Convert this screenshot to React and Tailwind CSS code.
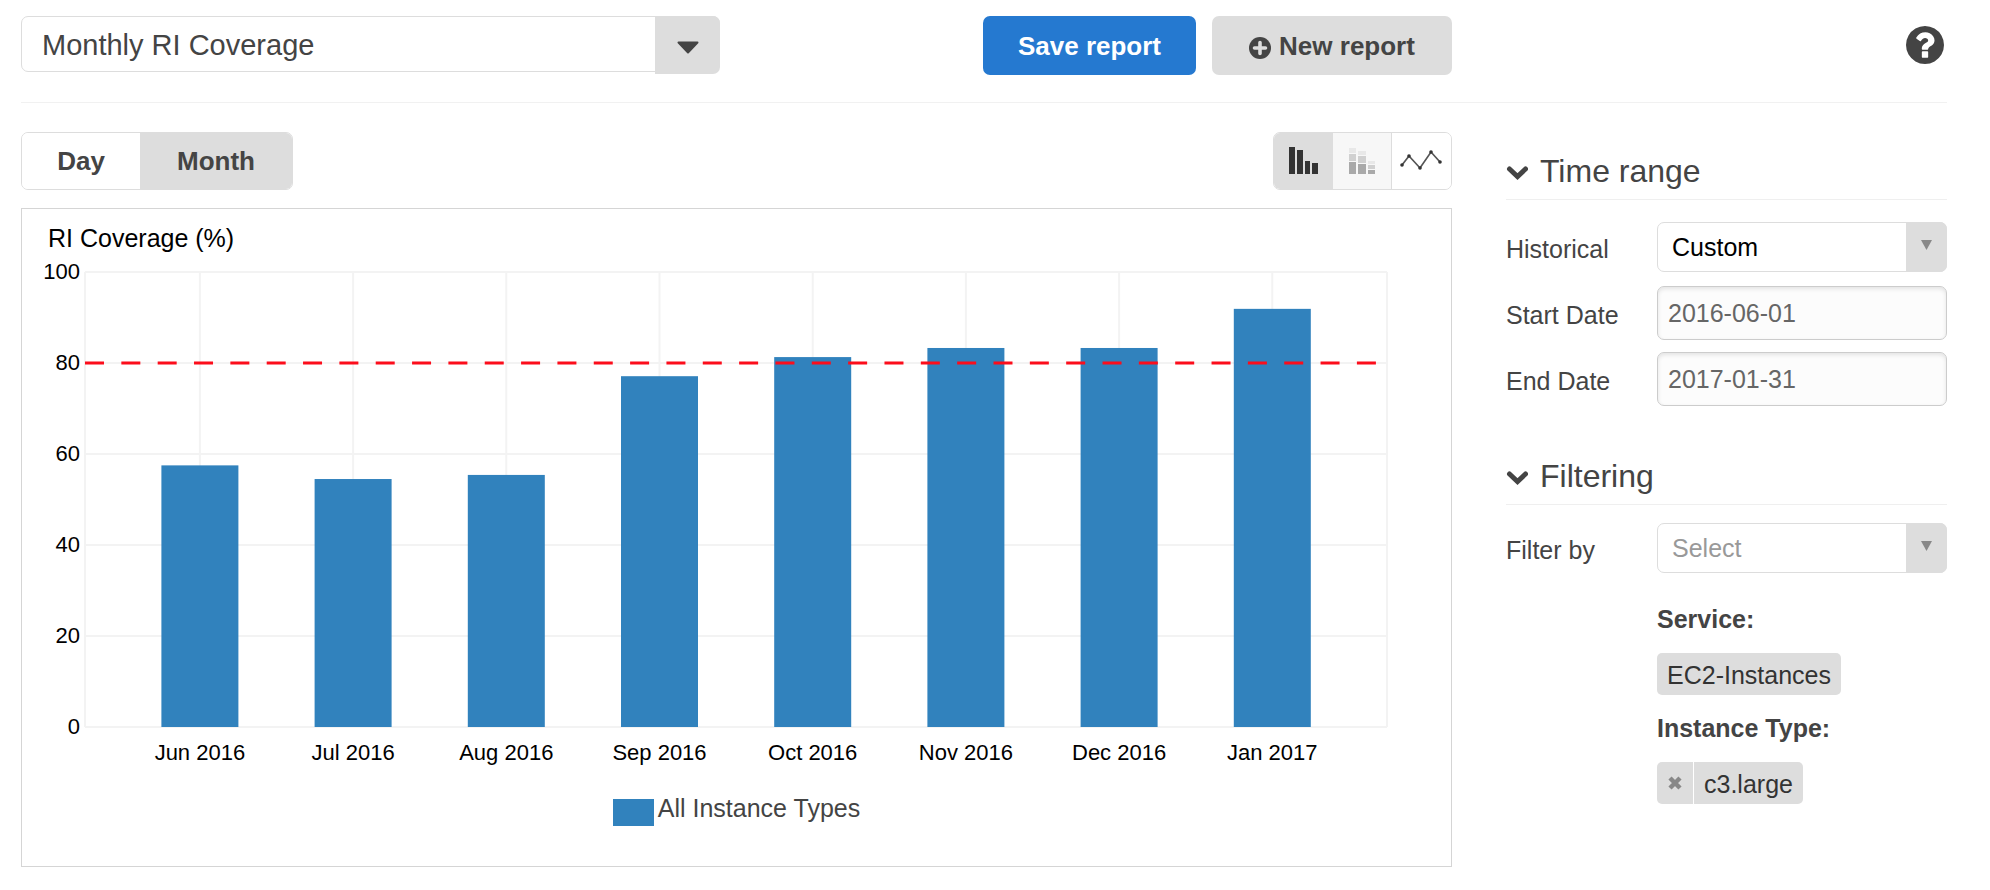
import { useState } from "react";

const BARS = [
  { label: "Jun 2016", value: 57.5 },
  { label: "Jul 2016", value: 54.5 },
  { label: "Aug 2016", value: 55.4 },
  { label: "Sep 2016", value: 77.1 },
  { label: "Oct 2016", value: 81.3 },
  { label: "Nov 2016", value: 83.3 },
  { label: "Dec 2016", value: 83.3 },
  { label: "Jan 2017", value: 91.9 },
];

const TICKS = [0, 20, 40, 60, 80, 100];

// plot area inside the chart's viewBox
const LEFT = 63;
const RIGHT = 1365;
const TOP = 12;
const BOTTOM = 467;
const STEP = 153.2;
const BAR_WIDTH = 77;

const yOf = (value) => BOTTOM - ((BOTTOM - TOP) * value) / 100;
const xOf = (i) => LEFT + STEP * (0.75 + i);

function CoverageChart({ target }) {
  return (
    <svg viewBox="0 0 1429 512" className="block w-full h-auto text-[22px]" role="img" aria-label="RI Coverage">
      <g stroke="#f3f3f3" strokeWidth="2">
        {TICKS.map((t) => (
          <line key={t} x1={LEFT} x2={RIGHT} y1={yOf(t)} y2={yOf(t)} />
        ))}
        {BARS.map((b, i) => (
          <line key={b.label} x1={xOf(i)} x2={xOf(i)} y1={TOP} y2={BOTTOM} />
        ))}
        <line x1={LEFT} x2={LEFT} y1={TOP} y2={BOTTOM} />
        <line x1={RIGHT} x2={RIGHT} y1={TOP} y2={BOTTOM} />
      </g>

      {TICKS.map((t) => (
        <text key={t} x={LEFT - 5} y={yOf(t) + 7} textAnchor="end">{t}</text>
      ))}

      {BARS.map((b, i) => (
        <g key={b.label}>
          <rect x={xOf(i) - BAR_WIDTH / 2} y={yOf(b.value)} width={BAR_WIDTH} height={BOTTOM - yOf(b.value)} fill="#3182bd" />
          <text x={xOf(i)} y="500" textAnchor="middle">{b.label}</text>
        </g>
      ))}

      <line
        x1={LEFT}
        x2={RIGHT}
        y1={yOf(target)}
        y2={yOf(target)}
        stroke="#fc0d1b"
        strokeWidth="3"
        strokeDasharray="19 17.34"
      />
    </svg>
  );
}

function BarsIcon() {
  return (
    <svg width="30" height="28" viewBox="0 0 30 28" fill="#333" aria-hidden="true">
      <rect x="0" y="0" width="6" height="27" />
      <rect x="8" y="3" width="6" height="24" />
      <rect x="16" y="14" width="5" height="13" />
      <rect x="23" y="16" width="6" height="11" />
    </svg>
  );
}

function StackedIcon() {
  return (
    <svg width="26" height="28" viewBox="0 0 26 28" aria-hidden="true">
      <g fill="#e8e8e8">
        <rect x="0" y="1" width="7" height="5" />
        <rect x="9" y="4" width="8" height="4" />
        <rect x="19" y="14" width="7" height="3" />
      </g>
      <g fill="#d0d0d0">
        <rect x="0" y="7" width="7" height="7" />
        <rect x="9" y="9" width="8" height="7" />
        <rect x="19" y="18" width="7" height="4" />
      </g>
      <g fill="#a9a9a9">
        <rect x="0" y="15" width="7" height="12" />
        <rect x="9" y="17" width="8" height="10" />
        <rect x="19" y="23" width="7" height="4" />
      </g>
    </svg>
  );
}

function LineIcon() {
  return (
    <svg width="44" height="22" viewBox="0 0 44 22" aria-hidden="true">
      <path d="M2 15 9 6 20 18 31 2 40 12" fill="none" stroke="#555" strokeWidth="1.7" />
      <g fill="#333">
        <circle cx="2" cy="15" r="1.8" />
        <circle cx="9" cy="6" r="1.8" />
        <circle cx="20" cy="18" r="1.8" />
        <circle cx="31" cy="2" r="1.8" />
        <circle cx="40" cy="12" r="1.8" />
      </g>
    </svg>
  );
}

function PlusCircleIcon() {
  return (
    <svg width="22" height="22" viewBox="0 0 22 22" aria-hidden="true">
      <circle cx="11" cy="11" r="11" fill="#444" />
      <path d="M11 5.5v11M5.5 11h11" stroke="#ddd" strokeWidth="3.6" strokeLinecap="round" />
    </svg>
  );
}

function HelpIcon() {
  return (
    <svg width="38" height="38" viewBox="0 0 1536 1536" aria-hidden="true">
      <path
        fill="#444"
        d="M896 1248v-192q0-14-9-23t-23-9H672q-14 0-23 9t-9 23v192q0 14 9 23t23 9h192q14 0 23-9t9-23zm256-672q0-88-55.500-163T958 297t-170-41q-243 0-371 213-15 24 8 42l132 100q7 6 19 6 16 0 25-12 53-68 86-92 34-24 86-24 48 0 85.500 26t37.500 59q0 38-20 61t-68 45q-63 28-115.500 86.500T640 892v36q0 14 9 23t23 9h192q14 0 23-9t9-23q0-19 21.500-49.500T972 829q32-18 49-28.500t46-35 44.500-48 28-60.500 12.500-81zm384 192q0 209-103 385.500T1153.500 1433 768 1536t-385.500-103T103 1153.500 0 768t103-385.500T382.500 103 768 0t385.500 103T1433 382.500 1536 768z"
      />
    </svg>
  );
}

function Section({ title, children }) {
  return (
    <section>
      <h2 className="border-b border-[#efefef] text-[32px] leading-10 pb-2 font-normal">
        <button type="button" className="flex items-center gap-3">
          <svg width="22" height="14" viewBox="0 0 22 14" className="mt-1" aria-hidden="true">
            <path d="M3.500 3l8 7.500L19.500 3" fill="none" stroke="#444" strokeWidth="5" strokeLinecap="round" />
          </svg>
          {title}
        </button>
      </h2>
      {children}
    </section>
  );
}

function Field({ label, id, children }) {
  return (
    <div className="flex h-[54px] items-center">
      <label htmlFor={id} className="w-[151px] shrink-0 pt-1">{label}</label>
      {children}
    </div>
  );
}

function SelectBox({ id, muted, children }) {
  return (
    <div className="relative flex-1">
      <select
        id={id}
        className={`block w-full h-[50px] appearance-none rounded-[7px] border border-[#ddd] bg-white pl-[14px] pr-12 ${muted ? "text-[#999]" : "text-black"}`}
      >
        {children}
      </select>
      <span className="pointer-events-none absolute inset-y-0 right-0 flex w-[41px] items-center justify-center rounded-r-[7px] bg-[#ddd]">
        <svg width="11" height="10" viewBox="0 0 11 10" className="mb-1" aria-hidden="true">
          <path d="M0 0h11L5.500 10z" fill="#888" />
        </svg>
      </span>
    </div>
  );
}

const dateClass =
  "block h-full w-full min-w-0 flex-1 rounded-[7px] border border-[#ccc] bg-[#fcfcfc] px-[10px] text-[#666] shadow-[inset_0_2px_4px_rgba(0,0,0,0.1)]";

export default function App() {
  const [granularity, setGranularity] = useState("Month");
  const [startDate, setStartDate] = useState("2016-06-01");
  const [endDate, setEndDate] = useState("2017-01-31");

  return (
    <div className="min-h-screen bg-white pl-[21px] pr-[43px] pt-4 font-['Liberation_Sans',Arial,sans-serif] text-[25px] leading-8 text-[#444]">
      {/* Top bar */}
      <header className="flex items-start border-b border-[#f1f1f1] pb-[27px]">
        <div className="flex flex-1 items-start justify-between">
          <div className="relative w-[699px]">
            <select
              aria-label="Report"
              className="block h-14 w-full appearance-none rounded-[7px] border border-[#ddd] bg-white pt-px pl-5 pr-16 text-[29px]"
            >
              <option>Monthly RI Coverage</option>
            </select>
            <span className="pointer-events-none absolute top-0 right-0 flex h-[58px] w-[65px] items-center justify-center rounded-r-[7px] bg-[#ddd]">
              <svg width="22" height="13" viewBox="0 0 22 13" className="mt-1" aria-hidden="true">
                <path d="M1.500 1.500h19L11 11.500z" fill="#444" stroke="#444" strokeWidth="2" strokeLinejoin="round" />
              </svg>
            </span>
          </div>
          <div className="flex gap-4 text-[26px] font-bold">
            <button type="button" className="h-[59px] w-[213px] rounded-[7px] bg-[#2579d0] text-white">
              Save report
            </button>
            <button type="button" className="flex h-[59px] w-[240px] items-center justify-center gap-2 rounded-[7px] bg-[#ddd]">
              <span className="pt-1"><PlusCircleIcon /></span>
              New report
            </button>
          </div>
        </div>
        <div className="ml-[54px] flex w-[441px] justify-end pt-[10px] pr-[3px]">
          <button type="button" aria-label="Help"><HelpIcon /></button>
        </div>
      </header>

      <div className="flex items-start gap-[54px] pt-[29px]">
        <main className="min-w-0 flex-1">
          <div className="flex justify-between">
            <div className="flex h-[58px] overflow-hidden rounded-[7px] border border-[#ddd] text-[26px] font-bold">
              <button
                type="button"
                onClick={() => setGranularity("Day")}
                className={`w-[118px] ${granularity === "Day" ? "bg-[#ddd]" : "bg-white"}`}
              >
                Day
              </button>
              <button
                type="button"
                onClick={() => setGranularity("Month")}
                className={`w-[152px] ${granularity === "Month" ? "bg-[#ddd]" : "bg-white"}`}
              >
                Month
              </button>
            </div>
            <div className="flex h-[58px] overflow-hidden rounded-[7px] border border-[#ddd]">
              <button type="button" aria-label="Bar chart" className="flex w-[59px] items-center justify-center bg-[#ddd]">
                <BarsIcon />
              </button>
              <button type="button" aria-label="Stacked chart" className="flex w-[59px] items-center justify-center border-r border-[#ddd] bg-[#f7f7f7]">
                <StackedIcon />
              </button>
              <button type="button" aria-label="Line chart" className="flex w-[59px] items-center justify-center bg-white">
                <LineIcon />
              </button>
            </div>
          </div>

          {/* Chart panel */}
          <div className="mt-[18px] border border-[#d5d5d5] pt-[13px] pb-10 text-black">
            <div className="pl-[26px]">RI Coverage (%)</div>
            <div className="mt-[6px]">
              <CoverageChart target={80} />
            </div>
            <div className="mt-5 flex justify-center gap-1 text-[#444]">
              <span className="mt-[7px] h-[27px] w-[41px] bg-[#3182bd]" />
              All Instance Types
            </div>
          </div>
        </main>

        <aside className="w-[441px] shrink-0 pt-[19px]">
          <Section title="Time range">
            <div className="flex flex-col gap-3 pt-5">
              <Field label="Historical" id="historical">
                <SelectBox id="historical">
                  <option>Custom</option>
                </SelectBox>
              </Field>
              <Field label="Start Date" id="start">
                <input id="start" type="text" value={startDate} onChange={(e) => setStartDate(e.target.value)} className={dateClass} />
              </Field>
              <Field label="End Date" id="end">
                <input id="end" type="text" value={endDate} onChange={(e) => setEndDate(e.target.value)} className={dateClass} />
              </Field>
            </div>
          </Section>

          <div className="pt-[50px]">
            <Section title="Filtering">
              <div className="pt-4">
                <Field label="Filter by" id="filter">
                  <SelectBox id="filter" muted>
                    <option>Select</option>
                  </SelectBox>
                </Field>
              </div>
              <div className="flex flex-col items-start pl-[151px] pt-7">
                <div className="font-bold">Service:</div>
                <div className="mt-[18px] rounded-[5px] bg-[#ddd] px-[10px] pt-[6px] pb-1 text-[#333]">EC2-Instances</div>
                <div className="mt-[17px] font-bold">Instance Type:</div>
                <div className="mt-[18px] flex h-[42px] overflow-hidden rounded-[5px] text-[#333]">
                  <button type="button" aria-label="Remove c3.large" className="mr-px flex w-9 items-center justify-center bg-[#ddd]">
                    <svg width="14" height="14" viewBox="0 0 14 14" aria-hidden="true">
                      <path d="M2 2l10 10M12 2L2 12" stroke="#888" strokeWidth="4.500" />
                    </svg>
                  </button>
                  <span className="bg-[#ddd] px-[10px] pt-[6px]">c3.large</span>
                </div>
              </div>
            </Section>
          </div>
        </aside>
      </div>
    </div>
  );
}
